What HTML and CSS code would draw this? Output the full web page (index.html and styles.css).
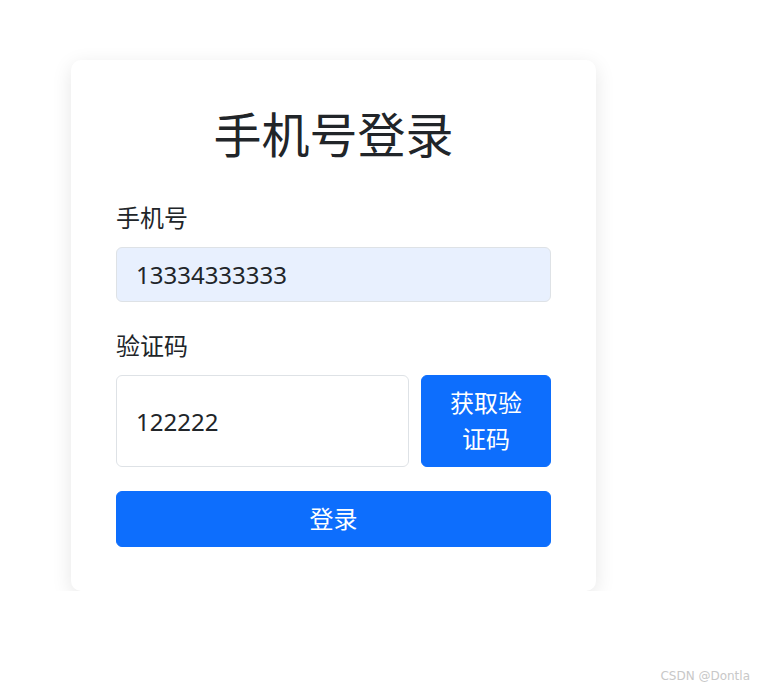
FILE: index.html
```html
<!DOCTYPE html>
<html lang="zh-CN">

<head>
    <meta charset="UTF-8">
    <meta name="viewport" content="width=device-width, initial-scale=1.0">
    <title>手机号登录</title>

    <link rel="stylesheet" href="styles.css">
</head>

<body>
    <div class="page">
        <div class="login-card">
            <h1 class="title">手机号登录</h1>
            <div class="field">
                <label class="form-label" for="phone">手机号</label>
                <input type="text" class="form-control autofill" id="phone" value="13334333333">
            </div>
            <div class="field">
                <label class="form-label" for="code">验证码</label>
                <div class="code-row">
                    <input type="text" class="form-control code-input" id="code" value="122222">
                    <button class="btn btn-code" id="send_code">获取验证码</button>
                </div>
            </div>
            <button class="btn btn-login" id="login">登录</button>
        </div>
    </div>
    <div class="watermark">CSDN @Dontla</div>
</body>

</html>
```

FILE: styles.css
```css
* {
    box-sizing: border-box;
    margin: 0;
    padding: 0;
}

body {
    background: #fff;
    color: #212529;
    font-family: "Noto Sans", "Noto Sans CJK SC", sans-serif;
    font-size: 24px;
    line-height: 1.5;
}

.page {
    padding: 60px 0 0 71px;
}

.login-card {
    width: 525px;
    padding: 45px 45px 44px;
    background: #fff;
    border-radius: 10px;
    box-shadow: 0 5px 20px rgba(0, 0, 0, 0.1);
}

.title {
    font-size: 48px;
    font-weight: 400;
    line-height: 60px;
    text-align: center;
    margin-bottom: 35px;
}

.field {
    margin-bottom: 26px;
}

.field:last-of-type {
    margin-bottom: 24px;
}

.form-label {
    display: block;
    margin-bottom: 11px;
}

.form-control {
    display: block;
    width: 100%;
    padding: 8.5px 19px;
    font-family: inherit;
    font-size: 24px;
    line-height: 36px;
    color: #212529;
    background: #fff;
    border: 1px solid #dee2e6;
    border-radius: 6px;
    outline: none;
}

.autofill {
    background: #e8f0fe;
}

.code-row {
    display: flex;
    gap: 12px;
}

.code-input {
    flex: 1;
    height: 92px;
}

.btn {
    font-family: inherit;
    font-size: 24px;
    line-height: 36px;
    color: #fff;
    background: #0d6efd;
    border: 1px solid #0d6efd;
    border-radius: 6px;
    cursor: pointer;
    text-align: center;
}

.btn-code {
    width: 130px;
    padding: 9px 24px;
}

.btn-login {
    display: block;
    width: 100%;
    padding: 9px 12px;
}

.watermark {
    position: absolute;
    right: 10px;
    bottom: 5px;
    font-family: "DejaVu Sans", sans-serif;
    font-size: 12px;
    color: #c8c8c8;
}
```
